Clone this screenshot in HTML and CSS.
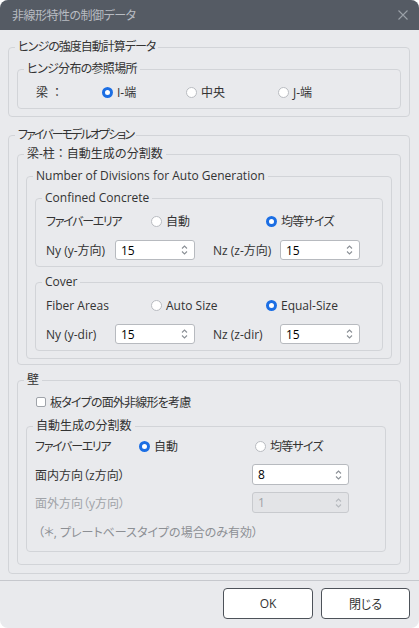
FILE: index.html
```html
<!DOCTYPE html>
<html>
<head>
    <meta charset="UTF-8">
    <title>非線形特性の制御データ</title>
    <link rel="stylesheet" href="styles.css">
</head>
<body>
    <div class="window">
        <div class="titlebar">
            <span class="title">非線形特性の制御データ</span>
            <svg class="close" width="12" height="12" viewBox="0 0 12 12">
                <path d="M1.5 1.5 L10.5 10.5 M10.5 1.5 L1.5 10.5" stroke="#9aa0a7" stroke-width="1.1" fill="none"/>
            </svg>
        </div>
        <div class="content">
            <fieldset class="grp grp-top">
                <legend class="ls-10">ヒンジの強度自動計算データ</legend>
                <fieldset class="grp">
                    <legend class="ls-07">ヒンジ分布の参照場所</legend>
                    <div class="row row-hinge">
                        <span class="cell w-beam">梁 ：</span>
                        <span class="cell w-iend"><i class="radio on"></i>I-端</span>
                        <span class="cell w-mid"><i class="radio"></i>中央</span>
                        <span class="cell"><i class="radio"></i>J-端</span>
                    </div>
                </fieldset>
            </fieldset>

            <fieldset class="grp grp-fiber">
                <legend class="ls-19">ファイバーモデルオプション</legend>
                <fieldset class="grp grp-beam">
                    <legend class="full">梁-柱：自動生成の分割数</legend>
                    <fieldset class="grp grp-num">
                        <legend>Number of Divisions for Auto Generation</legend>

                        <fieldset class="grp grp-sub">
                            <legend>Confined Concrete</legend>
                            <div class="row row-sub">
                                <span class="cell w-area ls-13">ファイバーエリア</span>
                                <span class="cell w-auto"><i class="radio"></i>自動</span>
                                <span class="cell ls-08"><i class="radio on"></i>均等サイズ</span>
                            </div>
                            <div class="row row-sub row-gap">
                                <span class="cell w-ny"><span class="clip clip-ny">Ny (y-方向)</span></span>
                                <span class="spin"><span class="val">15</span><svg class="arrows" width="7" height="12" viewBox="0 0 7 12"><path d="M1 4.5 L3.5 2 L6 4.5 M1 7.5 L3.5 10 L6 7.5" stroke="#8b9096" stroke-width="1.1" fill="none"/></svg></span>
                                <span class="cell w-nz"><span class="clip clip-nz">Nz (z-方向)</span></span>
                                <span class="spin"><span class="val">15</span><svg class="arrows" width="7" height="12" viewBox="0 0 7 12"><path d="M1 4.5 L3.5 2 L6 4.5 M1 7.5 L3.5 10 L6 7.5" stroke="#8b9096" stroke-width="1.1" fill="none"/></svg></span>
                            </div>
                        </fieldset>

                        <fieldset class="grp grp-sub grp-cover">
                            <legend>Cover</legend>
                            <div class="row row-sub">
                                <span class="cell w-area">Fiber Areas</span>
                                <span class="cell w-auto"><i class="radio"></i>Auto Size</span>
                                <span class="cell"><i class="radio on"></i>Equal-Size</span>
                            </div>
                            <div class="row row-sub row-gap">
                                <span class="cell w-ny">Ny (y-dir)</span>
                                <span class="spin"><span class="val">15</span><svg class="arrows" width="7" height="12" viewBox="0 0 7 12"><path d="M1 4.5 L3.5 2 L6 4.5 M1 7.5 L3.5 10 L6 7.5" stroke="#8b9096" stroke-width="1.1" fill="none"/></svg></span>
                                <span class="cell w-nz">Nz (z-dir)</span>
                                <span class="spin"><span class="val">15</span><svg class="arrows" width="7" height="12" viewBox="0 0 7 12"><path d="M1 4.5 L3.5 2 L6 4.5 M1 7.5 L3.5 10 L6 7.5" stroke="#8b9096" stroke-width="1.1" fill="none"/></svg></span>
                            </div>
                        </fieldset>
                    </fieldset>
                </fieldset>

                <fieldset class="grp grp-wall">
                    <legend>壁</legend>
                    <div class="row row-check ls-08">
                        <i class="checkbox"></i>板タイプの面外非線形を考慮
                    </div>
                    <fieldset class="grp grp-wallgen">
                        <legend>自動生成の分割数</legend>
                        <div class="row">
                            <span class="cell w-warea ls-13">ファイバーエリア</span>
                            <span class="cell w-wauto"><i class="radio on"></i>自動</span>
                            <span class="cell ls-08"><i class="radio"></i>均等サイズ</span>
                        </div>
                        <div class="row row-tall row-gap">
                            <span class="cell w-wlabel">面内方向（z方向）</span>
                            <span class="spin spin-wide"><span class="val">8</span><svg class="arrows" width="7" height="12" viewBox="0 0 7 12"><path d="M1 4.5 L3.5 2 L6 4.5 M1 7.5 L3.5 10 L6 7.5" stroke="#8b9096" stroke-width="1.1" fill="none"/></svg></span>
                        </div>
                        <div class="row row-tall row-gap2 disabled">
                            <span class="cell w-wlabel">面外方向（y方向）</span>
                            <span class="spin spin-wide spin-off"><span class="val">1</span><svg class="arrows" width="7" height="12" viewBox="0 0 7 12"><path d="M1 4.5 L3.5 2 L6 4.5 M1 7.5 L3.5 10 L6 7.5" stroke="#b6b9be" stroke-width="1.1" fill="none"/></svg></span>
                        </div>
                        <div class="row note">（＊, プレートベースタイプの場合のみ有効）</div>
                    </fieldset>
                </fieldset>
            </fieldset>
        </div>
        <div class="footer">
            <button class="btn btn-ok">OK</button>
            <button class="btn btn-close">閉じる</button>
        </div>
    </div>
</body>
</html>
```

FILE: styles.css
```css
html,
body {
    margin: 0;
    height: 100%;
    background: #ffffff;
}
body {
    font-family: "Open Sans", "Noto Sans CJK JP", sans-serif;
    font-feature-settings: "palt";
    font-size: 12px;
    color: #333333;
}
.window {
    width: 419px;
    height: 628px;
    background: #e9eaed;
    border-radius: 8px;
    overflow: hidden;
    display: flex;
    flex-direction: column;
}

/* title bar */
.titlebar {
    height: 30px;
    flex: none;
    background: #555b64;
    display: flex;
    align-items: center;
    justify-content: space-between;
    padding: 0 10px 0 12px;
}
.title {
    color: #b8bcc2;
    letter-spacing: -0.5px;
}
.close {
    display: block;
}

/* kana in the dialog font runs narrower than the kanji */
.ls-07 { letter-spacing: -0.7px; }
.ls-08 { letter-spacing: -0.8px; }
.ls-10 { letter-spacing: -1px; }
.ls-13 { letter-spacing: -1.3px; }
.ls-19 { letter-spacing: -1.9px; }
.full {
    font-feature-settings: normal;
}

/* group boxes */
.content {
    flex: 1;
    padding: 9px 9px 0 8px;
}
.grp {
    margin: 0;
    border: 1px solid #d2d4d8;
    border-radius: 4px;
    padding: 5px 8px 6px;
    min-width: 0;
}
.grp legend {
    line-height: 16px;
    padding: 0 3px;
    margin-left: -2px;
}
.grp-top {
    padding: 6px 8px 7px;
}
.grp-fiber {
    margin-top: 10px;
    padding: 3px 8px 8px;
}
.grp-beam {
    padding: 6px 8px 5px;
}
.grp-num {
    padding: 6px 8px 7px;
}
.grp-cover {
    margin-top: 7px;
}
.grp-wall {
    margin-top: 7px;
    padding: 4px 8px 12px;
}
.grp-wallgen {
    margin-top: 6px;
    margin-right: 6px;
    padding: 2px 8px 9px;
}

/* rows */
.row {
    display: flex;
    align-items: center;
    height: 20px;
    white-space: nowrap;
}
.row-tall {
    height: 21px;
}
.row-gap {
    margin-top: 8px;
}
.row-sub.row-gap {
    margin-top: 9px;
}
.row-gap2 {
    margin-top: 7px;
}
.row-hinge {
    padding-left: 10px;
}
.row-sub {
    padding-left: 2px;
}
.row-check {
    padding-left: 10px;
}
.cell {
    display: flex;
    align-items: center;
    flex: none;
}
.w-beam { width: 66px; font-feature-settings: normal; }
.w-iend { width: 84px; }
.w-mid { width: 92px; }
.w-area { width: 105px; }
.w-auto { width: 115px; }
.w-ny { width: 69px; }
.w-nz { width: 67px; margin-left: 18px; }
.w-warea { width: 104px; }
.w-wauto { width: 116px; }
.w-wlabel { width: 217px; }
.clip {
    overflow: hidden;
}
.clip-ny { width: 64px; }
.clip-nz { width: 60px; }

/* radio and check marks */
.radio {
    width: 11px;
    height: 11px;
    box-sizing: border-box;
    border-radius: 50%;
    border: 1px solid #b9bcc1;
    background: #ffffff;
    margin-right: 4px;
}
.radio.on {
    border: none;
    background: #ffffff;
    box-shadow: inset 0 0 0 3px #1c6ee3;
}
.checkbox {
    width: 10px;
    height: 10px;
    box-sizing: border-box;
    border: 1px solid #9fa3a9;
    border-radius: 2px;
    background: #ffffff;
    margin-right: 4px;
}

/* spin boxes */
.spin {
    width: 80px;
    height: 20px;
    box-sizing: border-box;
    border: 1px solid #b7babf;
    border-radius: 3px;
    background: #ffffff;
    display: flex;
    align-items: center;
    justify-content: space-between;
    padding: 0 6px 0 5px;
    flex: none;
    color: #000000;
}
.spin-wide {
    width: 97px;
    height: 21px;
}
.spin-off {
    background: #e3e4e7;
    border-color: #c8cace;
    color: #9ea1a6;
}
.arrows {
    display: block;
}
.disabled {
    color: #a0a3a8;
}
.note {
    margin-top: 9px;
    padding-left: 3px;
    color: #8c8f94;
}

/* footer buttons */
.footer {
    flex: none;
    border-top: 1px solid #c6c8cd;
    display: flex;
    justify-content: flex-end;
    gap: 8px;
    padding: 7px 9px 9px;
}
.btn {
    height: 31px;
    background: #ffffff;
    border: 1px solid #4d5259;
    border-radius: 4px;
    font-family: "Open Sans", "Noto Sans CJK JP", sans-serif;
    font-feature-settings: "palt";
    font-size: 12px;
    color: #333333;
    padding: 0;
}
.btn-ok { width: 90px; }
.btn-close { width: 89px; }
```
